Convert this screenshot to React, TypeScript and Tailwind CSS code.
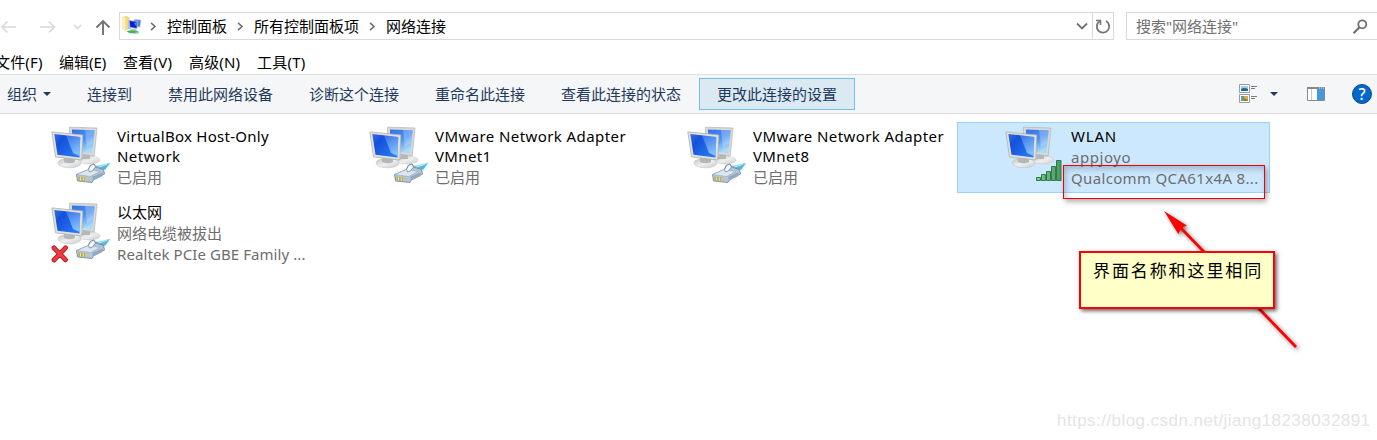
import React from "react";

const Monitors = () => (
  <>
    <ellipse cx="44" cy="40" rx="11" ry="4" fill="url(#stand)" stroke="#c2c4c5" strokeWidth=".5" />
    <path d="M38 32h7v7h-8z" fill="#b5b8bb" />
    <path d="M24.5 7.2 52 8 49.2 35.8 25 33z" fill="#d8dad9" stroke="#b0b3b3" strokeWidth=".7" />
    <path d="M27 9.5 49.7 10.3 47.3 33.2 27 31z" fill="url(#backScreen)" />
    <path d="M40 10 49.7 10.3 48.3 23 42 27z" fill="#fff" opacity=".25" />
    <ellipse cx="24.5" cy="43" rx="11.5" ry="4.8" fill="url(#stand)" stroke="#bbbdbe" strokeWidth=".5" />
    <path d="M19 35h11v7q-5 2.500-11 0z" fill="#b3b7b9" />
    <path d="M6.800 11.900 37.800 15 36.800 40 10.500 36.900z" fill="#e1e2df" stroke="#adb0b0" strokeWidth=".8" />
    <path d="M9.300 14 35.300 16.900 34.500 37.500 12.500 34.800z" fill="url(#frontScreen)" />
    <path d="M21 15.300 35.300 16.900 34.600 36 28 33z" fill="url(#shine)" />
  </>
);

const Plug = () => (
  <g strokeLinejoin="round">
    <path d="M48 46 54 45.800 65 43 60.500 49.500 54 51z" fill="#4fb9df" stroke="#a5d8e8" strokeWidth=".6" />
    <path d="m50 48.300 12-4" stroke="#c6eef8" strokeWidth="1" />
    <path d="m31.500 54.500 12-5 1.500-4 4-1.500 1.500 3 8 2.500 1 4.500-10.500 5-2 3.500-14.500-1.500z" fill="#b5c5d5" stroke="#6f8499" strokeWidth=".8" />
    <path d="m31.500 54.500 12-5 11.500 2-9.500 5z" fill="#dce7f0" stroke="#8fa2b4" strokeWidth=".5" />
    <path d="m43.500 49.500 2-4 3.500-1.500 1.500 3-3 4-3 1z" fill="#f3f8fb" stroke="#66798f" strokeWidth=".7" />
    <path d="m47 57 10.500-4.500v3.500l-9 4.500z" fill="#92a8c2" />
    <path d="m33.500 56.500 8.500 1v3.800l-8.500-1z" fill="#b3ad68" />
    <path d="M35.500 56.800v3.600m2.800-3.200v3.600m2.700-3.300v3.600" stroke="#ecec9c" strokeWidth=".9" />
  </g>
);

const Signal = () => (
  <g fill="url(#signal)" stroke="#2f7b48" strokeWidth="1">
    <path d="M37.500 57.500h4v3h-4zM42.500 54.500h4v6h-4zM47.500 51.500h4v9h-4zM52.500 46.500h4v14h-4zM57.500 40.500h4.500v20h-4.500z" />
  </g>
);

const AdapterIcon = ({ kind }: { kind: "plug" | "signal" | "off" }) => (
  <svg className="block size-[70px] shrink-0" viewBox="0 0 70 70">
    <defs>
      <linearGradient id="frontScreen" x1="0" y1="0" x2="1" y2=".8">
        <stop stopColor="#3a6fdc" />
        <stop offset=".3" stopColor="#1450dc" />
        <stop offset="1" stopColor="#2a7cf4" />
      </linearGradient>
      <linearGradient id="backScreen" x1="0" y1="0" x2=".5" y2="1">
        <stop stopColor="#3270e8" />
        <stop offset=".55" stopColor="#4b92f2" />
        <stop offset="1" stopColor="#a9dafa" />
      </linearGradient>
      <linearGradient id="shine" x1="0" y1="0" x2=".3" y2="1">
        <stop stopColor="#8fbcfa" stopOpacity=".3" />
        <stop offset="1" stopColor="#a8ddff" stopOpacity=".7" />
      </linearGradient>
      <linearGradient id="stand" x1="0" y1="0" x2="1" y2="1">
        <stop stopColor="#bfc1c2" />
        <stop offset=".5" stopColor="#eeefee" />
        <stop offset="1" stopColor="#c9cbcc" />
      </linearGradient>
      <linearGradient id="signal" x1="0" y1="0" x2="1" y2="0">
        <stop stopColor="#8bc59b" />
        <stop offset="1" stopColor="#4a9a62" />
      </linearGradient>
    </defs>
    <Monitors />
    {kind === "signal" ? <Signal /> : <Plug />}
    {kind === "off" && (
      <g strokeLinecap="round">
        <path d="m9 51.800 11.500 12m0-12L9 64" stroke="#b51a20" strokeWidth="4.800" />
        <path d="m9 51.800 11.500 12m0-12L9 64" stroke="#e93c40" strokeWidth="3" />
      </g>
    )}
  </svg>
);

type Line = { text: string; tracking?: string };
type Adapter = { lines: Line[]; dark: number; kind: "plug" | "signal" | "off"; selected?: boolean };

const adapters: Adapter[] = [
  {
    lines: [{ text: "VirtualBox Host-Only", tracking: "tracking-[0.27px]" }, { text: "Network", tracking: "tracking-[0.45px]" }, { text: "已启用" }],
    dark: 2,
    kind: "plug",
  },
  {
    lines: [{ text: "VMware Network Adapter", tracking: "tracking-[0.42px]" }, { text: "VMnet1", tracking: "tracking-[0.35px]" }, { text: "已启用" }],
    dark: 2,
    kind: "plug",
  },
  {
    lines: [{ text: "VMware Network Adapter", tracking: "tracking-[0.42px]" }, { text: "VMnet8", tracking: "tracking-[0.35px]" }, { text: "已启用" }],
    dark: 2,
    kind: "plug",
  },
  {
    lines: [{ text: "WLAN", tracking: "tracking-[0.8px]" }, { text: "appjoyo", tracking: "tracking-[0.55px]" }, { text: "Qualcomm QCA61x4A 8...", tracking: "tracking-[0.34px]" }],
    dark: 1,
    kind: "signal",
    selected: true,
  },
  {
    lines: [{ text: "以太网" }, { text: "网络电缆被拔出" }, { text: "Realtek PCIe GBE Family ...", tracking: "tracking-[0.08px]" }],
    dark: 1,
    kind: "off",
  },
];

const AdapterTile = ({ a }: { a: Adapter }) => (
  <div
    className={
      "relative flex h-[71px] w-[313px] border pl-[41px] " +
      (a.selected ? "border-[#99d1ff] bg-[#cce8ff]" : "border-transparent")
    }
  >
    <div className="-mt-[3px] h-[70px] shrink-0">
      <AdapterIcon kind={a.kind} />
    </div>
    <div
      className={
        "ml-[2px] pt-[3px] text-[15px] whitespace-nowrap " + (a.dark === 2 ? "leading-[20.3px]" : "leading-[21px]")
      }
    >
      {a.lines.map((l) => (
        <div key={l.text} className={(a.lines.indexOf(l) < a.dark ? "text-black " : "text-[#6d6d6d] ") + (l.tracking ?? "")}>
          {l.text}
        </div>
      ))}
    </div>
    {a.selected && (
      <div className="absolute top-[42px] left-[105px] h-[34px] w-[202px] border border-[#f00000] shadow-[2px_3px_5px_rgba(0,0,0,0.3),inset_2px_3px_6px_rgba(0,0,0,0.22)]" />
    )}
  </div>
);

const Chevron = () => (
  <svg className="h-[9px] w-[7px]" viewBox="0 0 7 9" fill="none">
    <path d="m1 .8 4 3.7-4 3.7" stroke="#707070" strokeWidth="1.6" />
  </svg>
);

const NavIcons = () => (
  <svg className="h-[30px] w-[119px] shrink-0" viewBox="0 0 119 30" fill="none">
    <g stroke="#d9d9d9" strokeWidth="1.6">
      <path d="M16 16H2.500M7.500 10.500 2 16l5.500 5.500M40 16h14M49 10.500l5.500 5.500-5.500 5.500" />
      <path d="m74 14 3.500 3.500L81 14" />
    </g>
    <path d="M103 24V10M96.500 16.500 103 10l6.500 6.500" stroke="#727272" strokeWidth="1.900" />
  </svg>
);

const FolderIcon = () => (
  <svg className="-mt-[3px] h-[20px] w-[20px]" viewBox="0 0 20 20">
    <path d="M.5 2 4.500 1l3 1.500v11l-4.500 2-2.500-2z" fill="#f3d67e" />
    <path d="m.5 2 3 1.500V15l-3-2z" fill="#fff0b1" />
    <path d="M6 5h3v9H6z" fill="#a9c4e8" />
    <path d="M12 4.500 19 5l-1 7-6-.5z" fill="#4f7edb" stroke="#c3cbd7" strokeWidth=".8" />
    <path d="m7 5.500 8.500 1-.5 7L8 12.500z" fill="#0b1fc8" stroke="#b7c5d8" strokeWidth=".8" />
    <path d="m12 8 3-1-.5 5z" fill="#4d84e8" />
    <path d="M9 14h5l1 1.500H8z" fill="#b9c3cc" />
    <path d="M4.500 16.500q5.500-2.500 12 0l-2 1.800H8z" fill="#3cb45e" />
    <path d="m12 18.500 5-1" stroke="#98c9a8" strokeWidth="1.500" />
  </svg>
);

const tools = ["连接到", "禁用此网络设备", "诊断这个连接", "重命名此连接", "查看此连接的状态"];

const ViewIcon = () => (
  <svg className="h-[20px] w-[19px]" viewBox="0 0 19 20" fill="none">
    <path d="M.5.5h10v8H.5zM.5 10.500h10v8H.5z" fill="#fff" stroke="#989ca0" />
    <path d="M2 2h7v5H2z" fill="#9fcdf0" />
    <path d="M2 5q3-2 7 0v2H2z" fill="#266495" />
    <path d="M2 12h7v5H2z" fill="#70a947" />
    <path d="M2 12h3v3H2z" fill="#5a95cc" />
    <path d="M5 12h4v3H6z" fill="#e4ab36" />
    <path d="M5 15h2v2H5z" fill="#d44d38" />
    <path d="M12 2.500h6M12 4.500h4M12 12.500h6M12 14.500h4" stroke="#777b80" />
  </svg>
);

const PaneIcon = () => (
  <svg className="h-[14px] w-[18px]" viewBox="0 0 18 14">
    <path d="M.5.5h17v13H.5z" fill="#fff" stroke="#85898d" />
    <path d="M0 0h18v2H0z" fill="#85898d" />
    <path d="M12 1h1m1 0h1m1 0h1" stroke="#fff" strokeWidth=".8" />
    <path d="M4.500 2v11" stroke="#c5c7ca" />
    <path d="M10 2h7v11h-7z" fill="#4199e3" />
  </svg>
);

const Caret = () => (
  <svg className="h-[4px] w-[8px]" viewBox="0 0 8 4">
    <path d="M0 0h8L4 4z" fill="#1e395b" />
  </svg>
);

export default function App() {
  return (
    <div className="relative flex h-[440px] w-[1377px] flex-col overflow-hidden bg-white font-['Noto_Sans','Noto_Sans_CJK_SC',sans-serif] text-[15px] leading-5">
      <header className="flex h-[52px] shrink-0 items-start overflow-hidden pt-[11px]">
        <NavIcons />
        <div className="mt-px flex h-[28px] w-[995px] shrink-0 items-center border border-[#d9d9d9] pl-[2px]">
          <FolderIcon />
          <span className="ml-[8px] flex w-[17px]"><Chevron /></span>
          <span className="w-[70px]">控制面板</span>
          <span className="flex w-[17px]"><Chevron /></span>
          <span className="w-[115px]">所有控制面板项</span>
          <span className="flex w-[17px]"><Chevron /></span>
          <span>网络连接</span>
          <svg className="mr-[4px] ml-auto h-[8px] w-[12px]" viewBox="0 0 12 8" fill="none">
            <path d="m1 1.500 5 5 5-5" stroke="#707070" strokeWidth="1.800" />
          </svg>
          <div className="flex h-full w-[21px] items-center justify-center border-l border-[#d9d9d9]">
            <svg className="size-[16px]" viewBox="0 0 16 16" fill="none" stroke="#747474" strokeWidth="1.800">
              <path d="M4.700 3.200A6.200 6.200 0 1 0 11 3" />
              <path d="M1 2.500h4.500V7" strokeWidth="1.600" />
            </svg>
          </div>
        </div>
        <div className="mt-px ml-[12px] flex h-[28px] w-[260px] shrink-0 items-center border border-[#d9d9d9] pl-[9px] text-[#707070]">
          <span className="w-[217px]">搜索"网络连接"</span>
          <svg className="size-[15px] shrink-0" viewBox="0 0 15 15" fill="none" stroke="#707070">
            <circle cx="9.300" cy="5.300" r="4" strokeWidth="1.800" />
            <path d="m6.500 8.200-6 6" strokeWidth="2.200" />
          </svg>
        </div>
      </header>
      <nav className="-ml-[5px] flex h-[22px] shrink-0 items-center pb-[2px] whitespace-nowrap text-black">
        <span className="w-[64px] tracking-[0.15px]">文件(F)</span>
        <span className="w-[64px]">编辑(E)</span>
        <span className="w-[66px] tracking-[0.25px]">查看(V)</span>
        <span className="w-[68px] tracking-[0.15px]">高级(N)</span>
        <span className="tracking-[0.25px]">工具(T)</span>
      </nav>
      <div className="flex h-[40px] shrink-0 items-center border-y border-[#dcdddf] bg-[#f5f6f7] text-[#1e395b]">
        <div className="flex w-[69px] items-center gap-[6px] pl-[7px]">
          组织 <Caret />
        </div>
        {tools.map((t) => (
          <div key={t} className="px-[18px]">{t}</div>
        ))}
        <div className="flex h-[32px] w-[156px] items-center justify-center border border-[#70c0e7] bg-[#dbe9f3]">
          更改此连接的设置
        </div>
        <div className="ml-auto flex items-center pr-[5px]">
          <ViewIcon />
          <span className="ml-[12px]"><Caret /></span>
          <span className="ml-[29px]"><PaneIcon /></span>
          <div className="ml-[27px] flex size-[20px] items-center justify-center rounded-full border border-[#0a4b91] bg-[#0067cb] text-[16px] leading-none font-medium text-white">
            ?
          </div>
        </div>
      </div>
      <main className="grid grid-cols-[repeat(4,318px)] gap-y-[5px] pt-[8px] pl-[3px]">
        {adapters.map((a, i) => (
          <AdapterTile key={i} a={a} />
        ))}
      </main>
      <svg
        className="absolute top-[200px] left-[1150px] h-[160px] w-[160px] drop-shadow-[2px_2px_2px_rgba(0,0,0,0.5)]"
        viewBox="0 0 160 160"
      >
        <path d="m28 25 118 122" stroke="#f00" strokeWidth="2.800" />
        <path d="M14 11 36.800 25.500 31.500 28 28.300 34z" fill="#f00" />
      </svg>
      <div className="absolute top-[251px] left-[1079px] h-[58px] w-[196px] border-2 border-[#f00] bg-[#ffffc8] pt-[7px] pl-[12px] font-['Noto_Sans_CJK_SC',sans-serif] text-[17px] leading-5 tracking-[1.900px] whitespace-nowrap text-black shadow-[2px_2px_4px_rgba(0,0,0,0.6)]">
        界面名称和这里相同
      </div>
      <div className="absolute top-[411px] left-[1057px] font-['Liberation_Sans',sans-serif] text-[17px] leading-5 tracking-[0.440px] whitespace-nowrap text-[#e4e4e4]">
        https://blog.csdn.net/jiang18238032891
      </div>
    </div>
  );
}
